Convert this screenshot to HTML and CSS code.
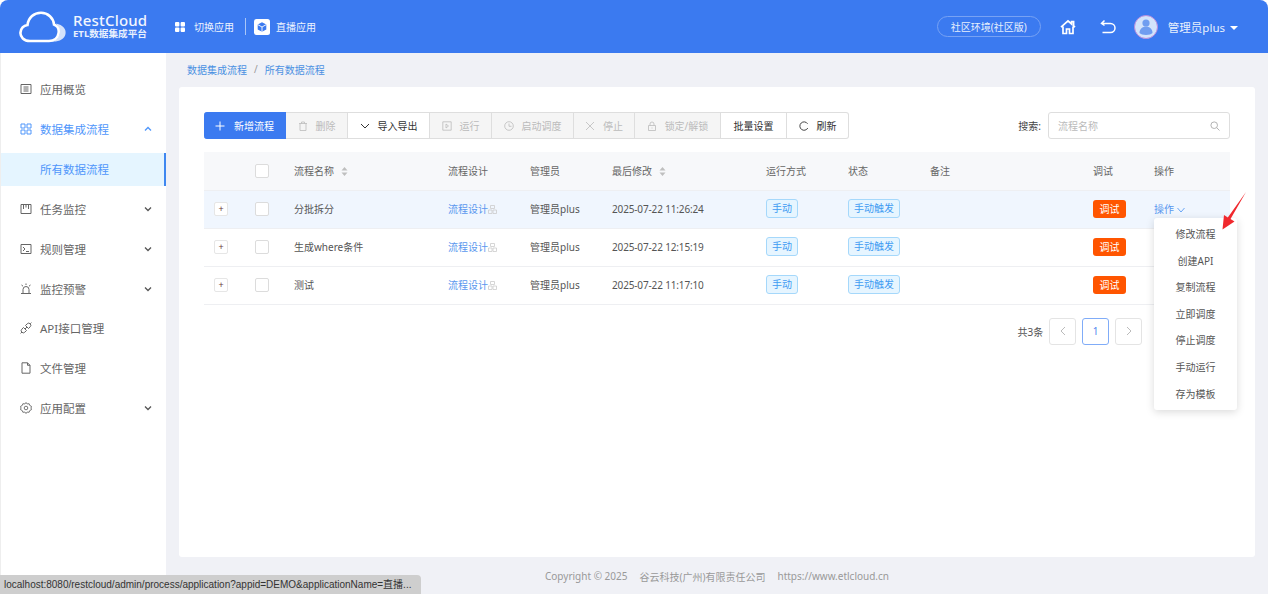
FILE: index.html
```html
<!DOCTYPE html>
<html lang="zh-CN">
<head>
<meta charset="utf-8">
<title>RestCloud ETL</title>
<link rel="stylesheet" href="styles.css">
</head>
<body>
<div class="app">
  <header class="topbar">
    <svg class="logo" viewBox="0 0 48 32" width="48" height="32"><path d="M37 12.500C44 14 47.500 18 46.500 23 45.500 28 40 31 33 30.500 37 29.500 40.500 26 40.500 21.500 40.500 18 39 15 37 12.500Z" fill="#d5e3fb"/><path d="M11 30C5 30 1 26 1.500 21.500 2 17 5 14.500 8.500 14 9.500 6.500 15 1.800 22 1.800 29 1.800 34.500 7 35 13.500 39 15 40.200 19 39.500 22.500 38.800 27 35 30 30 30Z" fill="none" stroke="#fff" stroke-width="2.600"/></svg>
    <div class="brand">
      <div class="brand-name">RestCloud</div>
      <div class="brand-sub">ETL数据集成平台</div>
    </div>
    <svg class="grid-ico" viewBox="0 0 10 10" width="10" height="10"><rect width="4.400" height="4.400" rx="1" fill="#fff"/><rect x="5.600" width="4.400" height="4.400" rx="1" fill="#fff"/><rect y="5.600" width="4.400" height="4.400" rx="1" fill="#fff"/><rect x="5.600" y="5.600" width="4.400" height="4.400" rx="1" fill="#fff"/></svg>
    <span class="top-link">切换应用</span>
    <span class="top-div"></span>
    <svg class="box-ico" viewBox="0 0 16 16" width="16" height="16"><rect width="16" height="16" rx="2.500" fill="#fff"/><path d="M8 3.200 12.300 5.600v4.800L8 12.800 3.700 10.400V5.600Z" fill="#3b7af0"/><path d="M3.700 5.600 8 8l4.300-2.400M8 8v4.800" fill="none" stroke="#fff" stroke-width=".9"/></svg>
    <span class="top-link">直播应用</span>
    <span class="top-spacer"></span>
    <span class="env-pill">社区环境(社区版)</span>
    <svg class="home-ico" viewBox="0 0 16 16" width="16" height="16"><path d="M1 8.200 8 1.800l3.600 3.200V2.600h2V6.800L15 8.200M3 7.400V14.500H6.500V10h3v4.500H13V7.400" fill="none" stroke="#fff" stroke-width="1.700"/></svg>
    <svg class="back-ico" viewBox="0 0 16 16" width="16" height="16"><path d="M4.500 1.500 1.500 4.500 4.500 6.500M1.500 4.500H10.500C13 4.500 15 6.500 15 9S13 13.500 10.500 13.500H2.500" fill="none" stroke="#fff" stroke-width="1.500"/></svg>
    <svg class="avatar" viewBox="0 0 24 24" width="24" height="24"><circle cx="12" cy="12" r="11.500" fill="#d3e3fb" stroke="#b98bdc" stroke-width="1"/><circle cx="12" cy="8" r="3.600" fill="#6f9df0"/><path d="M5.500 18c0-4 3-6.500 6.500-6.500s6.500 2.500 6.500 6.500c-2 2.500-11 2.500-13 0Z" fill="#6f9df0"/></svg>
    <span class="user-name">管理员plus</span>
    <span class="caret"></span>
  </header>

  <div class="body-row">
    <nav class="sidebar">
      <div class="nav-item">
        <svg class="nav-ico" viewBox="0 0 12 12"><path d="M1 1.500h10v9H1ZM3.500 4h5M3.500 6h5M3.500 8h5" fill="none" stroke="currentColor"/></svg>
        <span class="nav-text">应用概览</span>
      </div>
      <div class="nav-item nav-open">
        <svg class="nav-ico" viewBox="0 0 12 12"><path d="M1 1h4v4H1ZM7 1h4v4H7ZM1 7h4v4H1ZM7 7h4v4H7Z" fill="none" stroke="currentColor"/></svg>
        <span class="nav-text">数据集成流程</span>
        <svg class="chev" viewBox="0 0 8 6"><path d="M1 4.500 4 1.500 7 4.500" fill="none" stroke="currentColor" stroke-width="1.300"/></svg>
      </div>
      <div class="nav-sub">所有数据流程</div>
      <div class="nav-item">
        <svg class="nav-ico" viewBox="0 0 12 12"><path d="M1 1.500h10v9H1ZM3.500 2v4M6 2v2.500M8.500 2v4" fill="none" stroke="currentColor"/></svg>
        <span class="nav-text">任务监控</span>
        <svg class="chev" viewBox="0 0 8 6"><path d="M1 1.500 4 4.500 7 1.500" fill="none" stroke="currentColor" stroke-width="1.300"/></svg>
      </div>
      <div class="nav-item">
        <svg class="nav-ico" viewBox="0 0 12 12"><path d="M1 1.500h10v9H1ZM3 4l2 2-2 2M6 8.500h3" fill="none" stroke="currentColor"/></svg>
        <span class="nav-text">规则管理</span>
        <svg class="chev" viewBox="0 0 8 6"><path d="M1 1.500 4 4.500 7 1.500" fill="none" stroke="currentColor" stroke-width="1.300"/></svg>
      </div>
      <div class="nav-item">
        <svg class="nav-ico" viewBox="0 0 12 12"><path d="M3 10V6.500a3 3 0 0 1 6 0V10M1 10.500h10M6 .5V2M1.500 2 3 3.200M10.500 2 9 3.200" fill="none" stroke="currentColor"/></svg>
        <span class="nav-text">监控预警</span>
        <svg class="chev" viewBox="0 0 8 6"><path d="M1 1.500 4 4.500 7 1.500" fill="none" stroke="currentColor" stroke-width="1.300"/></svg>
      </div>
      <div class="nav-item">
        <svg class="nav-ico" viewBox="0 0 12 12"><path d="M1.800 7.200 3.500 5.500 6.500 8.500 4.800 10.200a2 2 0 0 1-3-3ZM5.500 3.500 7.200 1.800a2 2 0 0 1 3 3L8.500 6.500ZM.6 11.400 2 10M10.200 1.800 11.400.6M5 7 7 5" fill="none" stroke="currentColor"/></svg>
        <span class="nav-text">API接口管理</span>
      </div>
      <div class="nav-item">
        <svg class="nav-ico" viewBox="0 0 12 12"><path d="M2 .8h5.500L10 3.300v7.900H2ZM7.500.8v2.500H10" fill="none" stroke="currentColor"/></svg>
        <span class="nav-text">文件管理</span>
      </div>
      <div class="nav-item">
        <svg class="nav-ico" viewBox="0 0 12 12"><path d="M6 .5 7.200 2l1.900-.3.700 1.800 1.700.9L11 6l.5 1.600-1.700.9-.7 1.800L7.200 10 6 11.500 4.800 10l-1.900.3-.7-1.800-1.700-.9L1 6 .5 4.400l1.700-.9.700-1.800L4.800 2Z" fill="none" stroke="currentColor" stroke-width=".9"/><circle cx="6" cy="6" r="1.800" fill="none" stroke="currentColor" stroke-width=".9"/></svg>
        <span class="nav-text">应用配置</span>
        <svg class="chev" viewBox="0 0 8 6"><path d="M1 1.500 4 4.500 7 1.500" fill="none" stroke="currentColor" stroke-width="1.300"/></svg>
      </div>
    </nav>

    <main class="main">
      <div class="crumbs"><span>数据集成流程</span><span class="crumb-sep">/</span><span>所有数据流程</span></div>
      <section class="card">
        <div class="toolbar">
          <div class="btn-group">
            <button class="btn btn-primary btn-w82"><svg class="bi" viewBox="0 0 10 10"><path d="M5 .5v9M.5 5h9" fill="none" stroke="currentColor"/></svg>新增流程</button>
            <button class="btn btn-off btn-w62"><svg class="bi" viewBox="0 0 10 10"><path d="M1 2.500h8M3.500 2.500V1h3v1.500M2 2.500V9.500h6V2.500" fill="none" stroke="currentColor" stroke-width=".8"/></svg>删除</button>
            <button class="btn btn-w82"><svg class="bi" viewBox="0 0 10 10"><path d="M1 3 5 7 9 3" fill="none" stroke="currentColor"/></svg>导入导出</button>
            <button class="btn btn-off btn-w62"><svg class="bi" viewBox="0 0 10 10"><path d="M.8.8h8.400v8.400H.8ZM4 3l2.500 2L4 7Z" fill="none" stroke="currentColor" stroke-width=".8"/></svg>运行</button>
            <button class="btn btn-off btn-w82"><svg class="bi" viewBox="0 0 10 10"><circle cx="5" cy="5" r="4.300" fill="none" stroke="currentColor" stroke-width=".8"/><path d="M5 2.500V5.300H7.500" fill="none" stroke="currentColor" stroke-width=".8"/></svg>启动调度</button>
            <button class="btn btn-off btn-w61"><svg class="bi" viewBox="0 0 10 10"><path d="M1 1 9 9M9 1 1 9" fill="none" stroke="currentColor" stroke-width=".8"/></svg>停止</button>
            <button class="btn btn-off btn-w86"><svg class="bi" viewBox="0 0 10 10"><path d="M1.500 4.500h7v5h-7ZM3 4.500V3a2 2 0 0 1 4 0v1.500M5 6.500v1" fill="none" stroke="currentColor" stroke-width=".8"/></svg>锁定/解锁</button>
            <button class="btn btn-w66">批量设置</button>
            <button class="btn btn-w62"><svg class="bi" viewBox="0 0 10 10"><path d="M8.600 2.800A4.200 4.200 0 1 0 8.800 7" fill="none" stroke="currentColor" stroke-width=".9"/></svg>刷新</button>
          </div>
          <div class="search">
            <label class="search-label">搜索:</label>
            <div class="search-box">
              <span class="search-ph">流程名称</span>
              <svg class="search-ico" viewBox="0 0 10 10"><circle cx="4.200" cy="4.200" r="3.300" fill="none" stroke="currentColor" stroke-width=".9"/><path d="M6.700 6.700 9.500 9.500" stroke="currentColor" stroke-width=".9"/></svg>
            </div>
          </div>
        </div>

        <table class="tbl">
          <colgroup>
            <col class="c-exp"><col class="c-chk"><col class="c-name"><col class="c-design"><col class="c-admin"><col class="c-time"><col class="c-run"><col class="c-state"><col class="c-note"><col class="c-debug"><col class="c-act">
          </colgroup>
          <thead>
            <tr>
              <th></th>
              <th><span class="check"></span></th>
              <th>流程名称<svg class="sort" viewBox="0 0 7 11"><path d="M3.500 1 6.500 4.500H.5ZM3.500 10 .5 6.500H6.500Z" fill="#bfbfbf"/></svg></th>
              <th>流程设计</th>
              <th>管理员</th>
              <th>最后修改<svg class="sort" viewBox="0 0 7 11"><path d="M3.500 1 6.500 4.500H.5ZM3.500 10 .5 6.500H6.500Z" fill="#bfbfbf"/></svg></th>
              <th>运行方式</th>
              <th>状态</th>
              <th>备注</th>
              <th>调试</th>
              <th>操作</th>
            </tr>
          </thead>
          <tbody>
            <tr class="row-active">
              <td><span class="expander">+</span></td>
              <td><span class="check"></span></td>
              <td>分批拆分</td>
              <td><span class="link">流程设计</span><svg class="mini" viewBox="0 0 9 9"><path d="M2.500.5h4v3h-4ZM.5 5h3.500v3.500H.5ZM5 5h3.500v3.500H5Z" fill="none" stroke="#ccc" stroke-width=".8"/></svg></td>
              <td>管理员plus</td>
              <td class="time">2025-07-22 11:26:24</td>
              <td><span class="tag">手动</span></td>
              <td><span class="tag">手动触发</span></td>
              <td></td>
              <td><span class="debug">调试</span></td>
              <td><span class="link">操作</span><svg class="act-chev" viewBox="0 0 8 6"><path d="M.5 1 4 5 7.500 1" fill="none" stroke="#69a5f5"/></svg></td>
            </tr>
            <tr>
              <td><span class="expander">+</span></td>
              <td><span class="check"></span></td>
              <td>生成where条件</td>
              <td><span class="link">流程设计</span><svg class="mini" viewBox="0 0 9 9"><path d="M2.500.5h4v3h-4ZM.5 5h3.500v3.500H.5ZM5 5h3.500v3.500H5Z" fill="none" stroke="#ccc" stroke-width=".8"/></svg></td>
              <td>管理员plus</td>
              <td class="time">2025-07-22 12:15:19</td>
              <td><span class="tag">手动</span></td>
              <td><span class="tag">手动触发</span></td>
              <td></td>
              <td><span class="debug">调试</span></td>
              <td></td>
            </tr>
            <tr>
              <td><span class="expander">+</span></td>
              <td><span class="check"></span></td>
              <td>测试</td>
              <td><span class="link">流程设计</span><svg class="mini" viewBox="0 0 9 9"><path d="M2.500.5h4v3h-4ZM.5 5h3.500v3.500H.5ZM5 5h3.500v3.500H5Z" fill="none" stroke="#ccc" stroke-width=".8"/></svg></td>
              <td>管理员plus</td>
              <td class="time">2025-07-22 11:17:10</td>
              <td><span class="tag">手动</span></td>
              <td><span class="tag">手动触发</span></td>
              <td></td>
              <td><span class="debug">调试</span></td>
              <td></td>
            </tr>
          </tbody>
        </table>

        <div class="pager">
          <span class="pager-total">共3条</span>
          <span class="page-btn page-off"><svg class="page-ico" viewBox="0 0 6 10"><path d="M5 1 1 5 5 9" fill="none" stroke="currentColor"/></svg></span>
          <span class="page-btn page-cur">1</span>
          <span class="page-btn page-off"><svg class="page-ico" viewBox="0 0 6 10"><path d="M1 1 5 5 1 9" fill="none" stroke="currentColor"/></svg></span>
        </div>
      </section>
      <footer class="foot"><span>Copyright © 2025</span><span>谷云科技(广州)有限责任公司</span><span>https://www.etlcloud.cn</span></footer>
    </main>
  </div>

  <ul class="drop">
    <li>修改流程</li><li>创建API</li><li>复制流程</li><li>立即调度</li><li>停止调度</li><li>手动运行</li><li>存为模板</li>
  </ul>
  <svg class="red-arrow" viewBox="0 0 26 40" width="26" height="40"><path d="M25 1 9.500 28 13.500 30.500 1.500 38.500 3 24 6.800 26.500Z" fill="#f0282d"/></svg>
  <div class="status">localhost:8080/restcloud/admin/process/application?appid=DEMO&amp;applicationName=直播...</div>
</div>
</body>
</html>
```

FILE: styles.css
```css
* { box-sizing: border-box; }
html, body { margin: 0; padding: 0; height: 100%; overflow: hidden; background: #fff; }
body { font-family: "Noto Sans", "Noto Sans CJK SC", sans-serif; font-size: 10px; color: #555; }
.app { width: 1268px; height: 594px; display: flex; flex-direction: column; position: relative; overflow: hidden; }

.topbar { height: 53px; flex: none; display: flex; align-items: center; background: #3b7af0; border-radius: 8px 8px 0 0; color: #fff; padding-left: 19px; }
.logo { flex: none; margin-right: 6px; }
.brand { width: 85px; display: flex; flex-direction: column; margin-top: -1px; }
.brand-name { font-size: 15px; font-weight: 500; line-height: 16px; letter-spacing: .2px; color: #f2f6fe; }
.brand-sub { font-size: 9.600px; font-weight: 700; line-height: 12px; color: #e8f0fd; }
.grid-ico { flex: none; margin: 0 9px 0 17px; }
.top-link { font-size: 10px; color: #eef4fe; }
.top-div { width: 1px; height: 17px; background: #a9c6f8; margin: 0 8px 0 11px; }
.box-ico { flex: none; margin-right: 6px; }
.top-spacer { flex: 1; }
.env-pill { width: 104px; height: 21px; border: 1px solid #77a2f4; border-radius: 11px; display: flex; align-items: center; justify-content: center; font-size: 10px; color: #e6effd; }
.home-ico { flex: none; margin-left: 19px; }
.back-ico { flex: none; margin-left: 24px; }
.avatar { flex: none; margin-left: 18px; }
.user-name { margin-left: 10px; font-size: 11.500px; color: #e8f0fd; }
.caret { width: 0; height: 0; border-left: 4px solid transparent; border-right: 4px solid transparent; border-top: 4px solid #fff; margin: 2px 30px 0 5px; }

.body-row { flex: 1; display: flex; min-height: 0; }
.sidebar { width: 166px; flex: none; background: #fff; padding-top: 16px; border-left: 1px solid #eee; color: #666; }
.nav-item { height: 39.900px; display: flex; align-items: center; padding-left: 19px; padding-right: 14px; font-size: 11.500px; }
.nav-ico { width: 12px; height: 12px; flex: none; margin-right: 8px; color: #666; }
.nav-text { flex: 1; }
.chev { width: 8px; height: 6px; flex: none; color: #555; }
.nav-open, .nav-open .nav-ico, .nav-open .chev { color: #4f96fb; }
.nav-sub { height: 33px; margin: 4px 0 3px; padding-left: 39px; display: flex; align-items: center; font-size: 11.500px; color: #4f96fb; background: #e5f5ff; border-right: 2px solid #3f87f0; }

.main { flex: 1; min-width: 0; background: #f0f1f6; display: flex; flex-direction: column; padding: 0 13px; }
.crumbs { height: 32px; margin-bottom: 2px; flex: none; display: flex; align-items: center; gap: 5px; padding-left: 8px; color: #4a90e2; font-size: 10px; }
.crumb-sep { color: #999; margin: 0 2px; }
.card { height: 470px; flex: none; background: #fff; border-radius: 3px; padding: 25px; }
.toolbar { display: flex; justify-content: space-between; height: 27px; margin-bottom: 13px; }
.btn-group { display: flex; }
.btn { height: 27px; font: inherit; font-size: 10px; color: #333; background: #fff; border: 1px solid #dedede; border-left-width: 0; display: flex; align-items: center; justify-content: center; padding: 0; }
.btn:last-child { border-radius: 0 3px 3px 0; }
.btn-primary { background: #3b7af0; border-color: #3b7af0; color: #fff; border-radius: 3px 0 0 3px; }
.btn-off { background: #f5f5f5; color: #bbb; }
.bi { width: 10px; height: 10px; flex: none; margin-right: 8px; }
.btn-primary .bi { margin-right: 9px; }
.btn-w61 { width: 61px; }
.btn-w62 { width: 62px; }
.btn-w66 { width: 66px; }
.btn-w82 { width: 82px; }
.btn-w86 { width: 86px; }
.search { display: flex; align-items: center; }
.search-label { color: #444; margin-right: 7px; }
.search-box { width: 182px; height: 27px; border: 1px solid #dedede; border-radius: 3px; display: flex; align-items: center; justify-content: space-between; padding: 0 9px; }
.search-ph { color: #bbb; }
.search-ico { width: 10px; height: 10px; color: #aaa; }

.tbl { width: 1026px; border-collapse: collapse; table-layout: fixed; }
.c-exp { width: 41px; }
.c-chk { width: 39px; }
.c-name { width: 154px; }
.c-design { width: 82px; }
.c-admin { width: 82px; }
.c-time { width: 154px; }
.c-run { width: 82px; }
.c-state { width: 82px; }
.c-note { width: 163px; }
.c-debug { width: 61px; }
.c-act { width: 86px; }
.tbl th, .tbl td { height: 38px; padding: 0 10px; text-align: left; border-bottom: 1px solid #eeeff2; font-weight: 400; white-space: nowrap; overflow: visible; }
.tbl th { background: #f7f8fa; color: #666; }
.tbl td { color: #555; padding-bottom: 1px; }
.row-active td { background: #f0f6fe; }
.time { letter-spacing: -.15px; }
.check { display: block; width: 14px; height: 14px; background: #fff; border: 1px solid #dcdcdc; border-radius: 2px; }
.expander { display: block; width: 14px; height: 14px; background: #fff; border: 1px solid #e6e6e6; border-radius: 2px; line-height: 11px; text-align: center; color: #6b3a3a; font-size: 9px; }
.sort { width: 7px; height: 11px; margin-left: 7px; vertical-align: -2px; }
.link { color: #5a97ee; }
.mini { width: 9px; height: 9px; vertical-align: -1px; }
.tag { display: inline-block; height: 19px; line-height: 17px; padding: 0 5px; border: 1px solid #a5d8fb; border-radius: 3px; background: #e6f5ff; color: #3f9bf2; }
.debug { display: inline-block; width: 33px; height: 18px; line-height: 18px; text-align: center; border-radius: 3px; background: #ff5500; color: #fff; }
.act-chev { width: 8px; height: 6px; margin-left: 3px; }

.pager { display: flex; align-items: center; margin: 13px 0 0 813.500px; gap: 6px; }
.pager-total { color: #555; }
.page-btn { width: 27px; height: 27px; border: 1px solid #e4e4e4; border-radius: 3px; display: flex; align-items: center; justify-content: center; color: #5a97ee; }
.page-off { color: #bbb; }
.page-cur { border-color: #80acf8; color: #4f86ee; }
.page-ico { width: 6px; height: 10px; }

.foot { flex: 1; display: flex; justify-content: center; gap: 12px; padding: 12px 0 0 0; color: #999; font-size: 10px; }

.drop { position: absolute; left: 1154px; top: 218px; width: 83px; height: 192px; margin: 0; padding: 3px 0; list-style: none; background: #fff; border-radius: 3px; box-shadow: 0 2px 8px rgba(0,0,0,.15); }
.drop li { height: 26.600px; line-height: 26.600px; text-align: center; color: #555; font-size: 10px; }
.red-arrow { position: absolute; left: 1221px; top: 191px; }
.status { position: absolute; left: 0; bottom: 0; width: 421px; height: 19px; line-height: 20px; padding-left: 4px; background: #cecece; border-radius: 0 4px 0 0; color: #333; font-family: "Liberation Sans", "Noto Sans CJK SC", sans-serif; font-size: 10px; white-space: nowrap; overflow: hidden; }
```
